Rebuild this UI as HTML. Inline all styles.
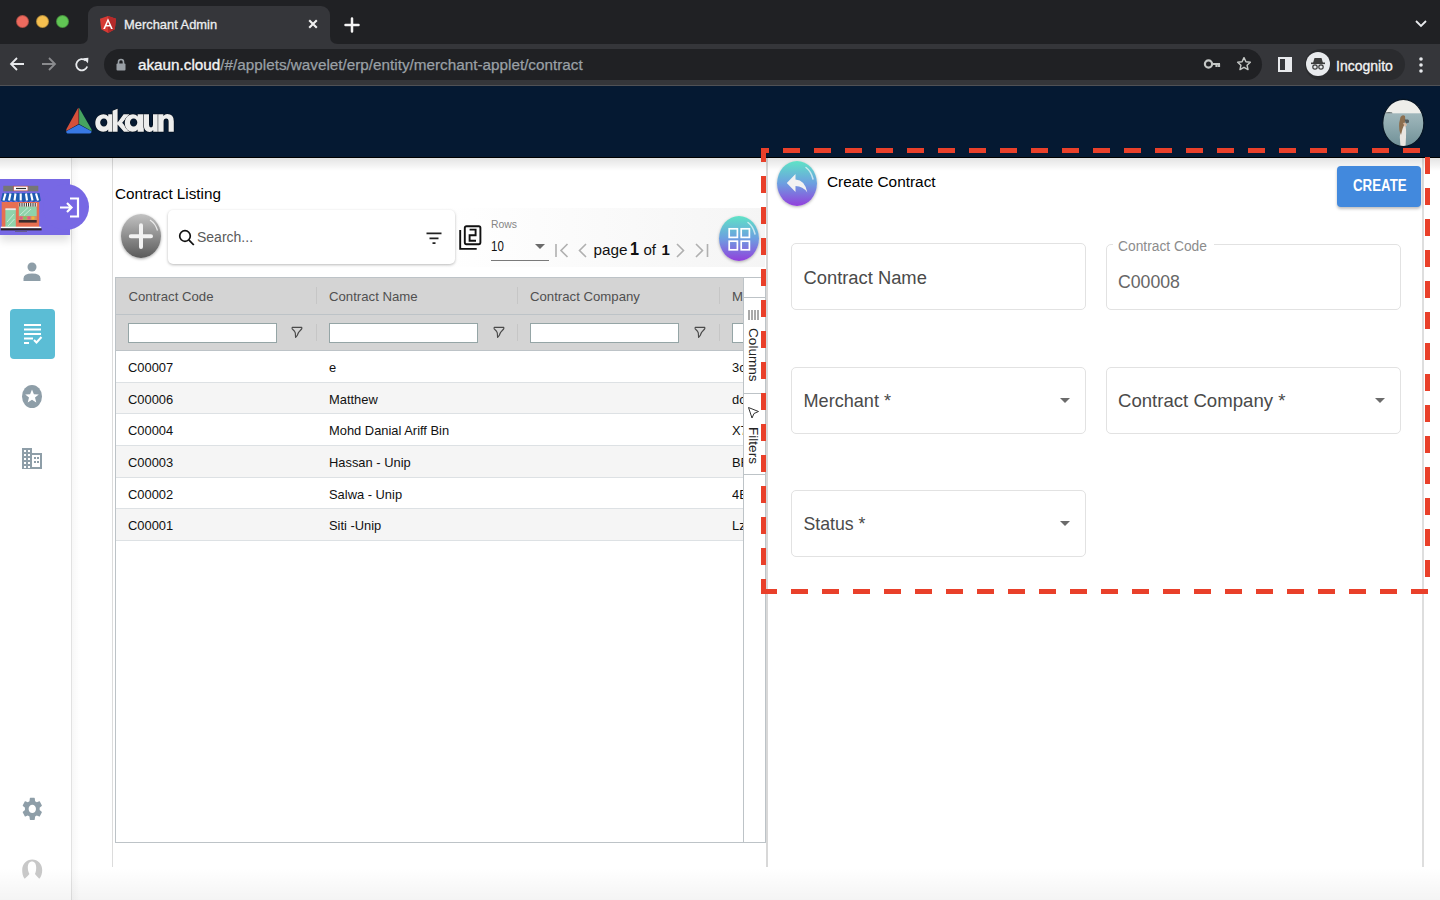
<!DOCTYPE html>
<html><head><meta charset="utf-8">
<style>
*{margin:0;padding:0;box-sizing:border-box}
html,body{width:1440px;height:900px;overflow:hidden;background:#fff;font-family:"Liberation Sans",sans-serif;position:relative}
.a{position:absolute}
.t{position:absolute;white-space:nowrap;line-height:1}
svg{position:absolute;overflow:visible}
#tabbar{left:0;top:0;width:1440px;height:44px;background:#202124}
#tab{left:88px;top:6px;width:242px;height:38px;background:#35363a;border-radius:9px 9px 0 0}
#addr{left:0;top:44px;width:1440px;height:41px;background:#35363a}
#omni{left:104px;top:49px;width:1158px;height:31px;background:#202124;border-radius:16px}
#hdr{left:0;top:85px;width:1440px;height:73px;background:#051932;border-top:1px solid #505155;border-bottom:1px solid #000}
.dot{width:13px;height:13px;border-radius:50%;border:1px solid rgba(0,0,0,.25)}
/* sidebar */
#side{left:0;top:158px;width:72px;height:742px;background:#fff;border-right:1px solid #e3e3e3}
.field{position:absolute;border:1px solid #e2e2e2;border-radius:5px;background:#fff}
.ftxt{color:#4a4a4a;font-size:18px}
.arr{position:absolute;width:0;height:0;border-left:5px solid transparent;border-right:5px solid transparent;border-top:5px solid #6b6b6b}
.rt{font-size:12.9px;color:#111}
.ht{font-size:13.2px;color:#505050}
.fin{height:20px;background:#fff;border:1px solid #95a5a6}
</style></head><body>
<!-- browser chrome -->
<div id="tabbar" class="a"></div>
<div class="a dot" style="left:16px;top:14.5px;background:#ed6a5e"></div>
<div class="a dot" style="left:36px;top:14.5px;background:#f5bf4f"></div>
<div class="a dot" style="left:56px;top:14.5px;background:#61c554"></div>
<div id="tab" class="a"></div>
<!-- tab outer curves -->
<svg style="left:80px;top:36px" width="8" height="8"><path d="M0 8 Q8 8 8 0 L8 8Z" fill="#35363a"/></svg>
<svg style="left:330px;top:36px" width="8" height="8"><path d="M8 8 Q0 8 0 0 L0 8Z" fill="#35363a"/></svg>
<!-- angular icon -->
<svg style="left:100px;top:16px" width="16" height="17" viewBox="0 0 16 17"><path d="M8 0 L16 2.8 L14.8 13.2 L8 17 L1.2 13.2 L0 2.8Z" fill="#d63a34"/><path d="M8 0 L16 2.8 L14.8 13.2 L8 17Z" fill="#b52a2a"/><path d="M8 2.2 L3.2 13 H5 L6 10.5 H10 L11 13 H12.8Z M8 5.8 L9.4 9 H6.6Z" fill="#fff"/></svg>
<div class="t" style="left:124px;top:19px;font-size:12.9px;color:#eceef0;-webkit-text-stroke:0.3px #eceef0">Merchant Admin</div>
<svg style="left:308px;top:19px" width="10" height="10"><path d="M1.2 1.2 L8.8 8.8 M8.8 1.2 L1.2 8.8" stroke="#f0f0f0" stroke-width="2.1"/></svg>
<svg style="left:345px;top:18px" width="14" height="14"><path d="M7 0.5 V13.5 M0.5 7 H13.5" stroke="#f4f4f4" stroke-width="2.5" stroke-linecap="round"/></svg>
<svg style="left:1415px;top:20px" width="12" height="8"><path d="M1 1 L6 6 L11 1" stroke="#e8eaed" stroke-width="1.8" fill="none"/></svg>
<div id="addr" class="a"></div>
<!-- nav icons -->
<svg style="left:9px;top:56px" width="16" height="16"><path d="M15 8 H2 M8 2 L2 8 L8 14" stroke="#e8eaed" stroke-width="1.8" fill="none"/></svg>
<svg style="left:41px;top:56px" width="16" height="16"><path d="M1 8 H14 M8 2 L14 8 L8 14" stroke="#8a8b8e" stroke-width="1.8" fill="none"/></svg>
<svg style="left:74px;top:57px" width="16" height="16"><path d="M13.2 9.5 A5.6 5.6 0 1 1 11.6 3.6" stroke="#e8eaed" stroke-width="1.8" fill="none"/><path d="M9 1.2 L14.4 0.8 L14 6.2Z" fill="#e8eaed"/></svg>
<div id="omni" class="a"></div>
<svg style="left:116px;top:58px" width="10" height="13"><path d="M2.5 6 V4 A2.5 2.5 0 0 1 7.5 4 V6" stroke="#9aa0a6" stroke-width="1.6" fill="none"/><rect x="0.5" y="5.5" width="9" height="7" rx="1" fill="#9aa0a6"/></svg>
<div class="t" style="left:138px;top:57.3px;font-size:15.28px;color:#9aa0a6;-webkit-text-stroke:0.25px #9aa0a6"><span style="color:#f4f4f4;-webkit-text-stroke:0.35px #f4f4f4">akaun.cloud</span>/#/applets/wavelet/erp/entity/merchant-applet/contract</div>
<svg style="left:1204px;top:58px" width="17" height="12"><circle cx="4.5" cy="6" r="3.6" fill="none" stroke="#c4c7c5" stroke-width="2.2"/><path d="M8 6 H16 M12.5 6 V9 M15 6 V9" stroke="#c4c7c5" stroke-width="2.2"/></svg>
<svg style="left:1236px;top:56px" width="16" height="16" viewBox="0 0 24 24"><path d="M12 2.5 L14.9 8.6 L21.5 9.3 L16.6 13.8 L18 20.4 L12 17 L6 20.4 L7.4 13.8 L2.5 9.3 L9.1 8.6Z" fill="none" stroke="#c4c7c5" stroke-width="2.2" stroke-linejoin="round"/></svg>
<svg style="left:1278px;top:57px" width="14" height="15"><rect x="1" y="1" width="12" height="13" fill="none" stroke="#e8eaed" stroke-width="2"/><rect x="7" y="1" width="6" height="13" fill="#e8eaed"/></svg>
<div class="a" style="left:1305px;top:49px;width:100px;height:31px;border-radius:16px;background:#2a2b2e"></div>
<div class="a" style="left:1306px;top:52px;width:24px;height:24px;border-radius:50%;background:#e8eaed"></div>
<svg style="left:1308px;top:54px" width="20" height="20" viewBox="0 0 20 20"><path d="M5 9 L6.5 4 H13.5 L15 9Z" fill="#3c3c3c"/><rect x="3" y="8.5" width="14" height="1.6" fill="#3c3c3c"/><circle cx="7" cy="13" r="2.2" fill="none" stroke="#3c3c3c" stroke-width="1.2"/><circle cx="13" cy="13" r="2.2" fill="none" stroke="#3c3c3c" stroke-width="1.2"/></svg>
<div class="t" style="left:1336px;top:58.5px;font-size:14px;color:#f4f4f4;-webkit-text-stroke:0.3px #f4f4f4">Incognito</div>
<svg style="left:1418px;top:56px" width="6" height="18"><circle cx="3" cy="3" r="1.8" fill="#e8eaed"/><circle cx="3" cy="9" r="1.8" fill="#e8eaed"/><circle cx="3" cy="15" r="1.8" fill="#e8eaed"/></svg>

<!-- app header -->
<div id="hdr" class="a"></div>
<svg style="left:66px;top:107px" width="27" height="28" viewBox="0 0 27 28"><path d="M12.6 0.7 Q12.8 0.5 12.6 0.7 L12.6 17 L0.3 23.9 Q0 23 0.6 21.8 L11.6 1.8Z" fill="#d6503a"/><path d="M13.1 0.7 L25.3 22 Q25.8 23 25.5 23.9 L13.1 17Z" fill="#46a460"/><path d="M12.85 17.4 L25.5 24.3 Q25.8 26.6 23.5 26.6 L2.5 26.6 Q0 26.6 0.3 24.3Z" fill="#3878e4"/></svg>
<svg style="left:0;top:0" width="200" height="140"><g fill="#ededed" stroke="#02070d" stroke-width="0.9" paint-order="stroke">
<path fill-rule="evenodd" d="M103.6 114.3 C98.6 114.3 95.3 118.2 95.3 123.05 C95.3 127.9 98.6 131.8 103.2 131.8 C105.3 131.8 107 131 108.2 129.6 V131.8 H112.6 V114.3 H108.2 V116.4 C107 115 105.5 114.3 103.6 114.3Z M103.9 118.4 C106.1 118.4 107.3 120.3 107.3 122.6 C107.3 124.9 106.1 126.6 103.9 126.6 C101.7 126.6 100.2 124.9 100.2 122.6 C100.2 120.3 101.7 118.4 103.9 118.4Z"/>
<path d="M112.6 110.8 L117.6 108.8 V122.6 L123.6 114.3 H129.6 L122.2 122.8 L130.2 131.8 H124 L117.6 124.6 V131.8 H112.6Z"/>
<path fill-rule="evenodd" d="M133 114.3 C128 114.3 124.8 118.2 124.8 123.05 C124.8 127.9 128 131.8 132.6 131.8 C134.7 131.8 136.4 131 137.6 129.6 V131.8 H143.8 V114.3 H137.6 V116.4 C136.4 115 134.9 114.3 133 114.3Z M133.6 118.4 C135.8 118.4 137.3 120.3 137.3 122.6 C137.3 124.9 135.8 126.6 133.6 126.6 C131.4 126.6 130 124.9 130 122.6 C130 120.3 131.4 118.4 133.6 118.4Z"/>
<path d="M143.8 114.3 H149 V124.8 Q149 127.4 151 127.4 Q153 127.4 153 124.8 V114.3 H158.2 V131.8 H153.2 V130 Q152 131.9 149.6 131.9 Q143.8 131.9 143.8 125Z"/>
<path d="M158.2 131.8 V114.3 H163.4 V116.1 Q164.8 114.1 167.2 114.1 Q173.8 114.1 173.8 121.2 V131.8 H168.6 V121.8 Q168.6 118.6 166.2 118.6 Q163.6 118.6 163.6 121.8 V131.8Z"/>
</g></svg>
<svg style="left:1382px;top:99px" width="42" height="48" viewBox="0 0 42 48"><defs><clipPath id="av"><ellipse cx="21.3" cy="24" rx="20.6" ry="23.6"/></clipPath><linearGradient id="sea" x1="0" y1="0" x2="0" y2="1"><stop offset="0" stop-color="#b3c6c9"/><stop offset="0.5" stop-color="#93adb2"/><stop offset="1" stop-color="#6f8f96"/></linearGradient></defs><g clip-path="url(#av)"><rect width="42" height="48" fill="url(#sea)"/><rect width="42" height="14.3" fill="#eeeeea"/><path d="M2 14.3 Q5 12.6 10 13.4 L10.5 14.3Z" fill="#3a4a4c"/><path d="M17.8 38 Q18.5 31 19.5 26 L23 25 Q24.5 30 24 38 L23.5 48 H18.5Z" fill="#e9e6e1"/><path d="M18.5 18 Q20.5 15 23 17 Q23.8 20 22.5 25 Q20 30 19 36 Q16.5 31 17.2 24Z" fill="#8c6e4e"/><path d="M22.5 20.5 H26 Q27.5 21 27 23.5 L24 24.5Z" fill="#535b5d"/><path d="M21 24 Q24 23 25 26 L23 28Z" fill="#d9b9a0"/></g><ellipse cx="21.3" cy="24" rx="20.6" ry="23.6" fill="none" stroke="#061423" stroke-width="1.2"/></svg>


<!-- page shadows -->
<div class="a" style="left:72px;top:158px;width:1368px;height:742px;background:#fff"></div>

<!-- panels -->
<div class="a" style="left:112px;top:158px;width:1px;height:709px;background:#dcdcdc"></div>
<div class="a" style="left:766px;top:158px;width:2px;height:709px;background:#d8d8d8"></div>
<div class="a" style="left:1422px;top:158px;width:2px;height:709px;background:#dedede"></div>

<div class="a" style="left:72px;top:158px;width:8px;height:742px;background:linear-gradient(90deg,rgba(0,0,0,.03),rgba(0,0,0,0))"></div>

<!-- sidebar -->
<div class="a" style="left:0;top:158px;width:71px;height:742px;background:#fff"></div>
<div class="a" style="left:71px;top:158px;width:1px;height:742px;background:#e2e2e2"></div>
<div class="a" style="left:0;top:158px;width:1440px;height:13px;background:linear-gradient(rgba(0,0,0,.11),rgba(0,0,0,0))"></div>
<div class="a" style="left:0;top:179px;width:70px;height:56px;background:#7768e4;box-shadow:0 6px 8px rgba(0,0,0,.12)"></div>
<div class="a" style="left:43px;top:184px;width:46px;height:46px;border-radius:50%;background:#7768e4"></div>
<!-- shop image -->
<svg style="left:0;top:184px" width="42" height="48" viewBox="0 0 42 48">
<rect x="3.3" y="1.8" width="35" height="5.5" fill="#767676"/><rect x="13.7" y="2.2" width="14.2" height="4.6" fill="#fff" stroke="#c44" stroke-width="0.5"/><path d="M16 4.5 H26" stroke="#333" stroke-width="1.2"/>
<rect x="1.7" y="18" width="37.5" height="25.5" fill="#e76f51"/>
<path d="M2.5 9 H39.5 L40.8 16.5 Q38.5 19 36 16.8 Q33.5 19 31 16.8 Q28.5 19 26 16.8 Q23.5 19 21 16.8 Q18.5 19 16 16.8 Q13.5 19 11 16.8 Q8.5 19 6 16.8 Q3.5 19 0.8 16.5Z" fill="#1e5bb0"/>
<path d="M5.5 9.5 L3.5 16.5 M10.5 9.5 L9 16.5 M15.5 9.5 L14.5 16.5 M20.7 9.5 V16.5 M26 9.5 L27 16.5 M31 9.5 L32.5 16.5 M36 9.5 L38 16.5" stroke="#fff" stroke-width="2.1"/>
<rect x="5.4" y="25.5" width="10.4" height="18.8" fill="#8fd3ab"/><rect x="5.4" y="24.3" width="10.4" height="1.8" fill="#e8e8e8"/><path d="M7 38 L14 30 M8 42 L14.5 35" stroke="#d8f0e0" stroke-width="0.8"/>
<rect x="18.8" y="19" width="17.9" height="3.7" fill="#fff"/><path d="M19.8 19 V22.7 M22 19 V22.7 M24.2 19 V22.7 M26.4 19 V22.7 M28.6 19 V22.7 M30.8 19 V22.7 M33 19 V22.7 M35.2 19 V22.7" stroke="#222" stroke-width="1"/>
<rect x="18.8" y="22.7" width="17.9" height="9.6" fill="#8fd3ab"/><path d="M20 31 L28 23.5 M24 31.5 L31 25" stroke="#d8f0e0" stroke-width="0.8"/>
<rect x="18.8" y="32.2" width="17.9" height="3.8" fill="#c96"/><rect x="19.5" y="32.5" width="3" height="3" fill="#e05a8a"/><rect x="23.5" y="32.5" width="3" height="3" fill="#7cc46a"/><rect x="27.5" y="32.5" width="3" height="3" fill="#e05a8a"/><rect x="31.5" y="32.5" width="3" height="3" fill="#f2b33d"/>
<rect x="18.8" y="36" width="17.9" height="2.6" fill="#3b2c2c"/>
<rect x="0.8" y="42.7" width="40.4" height="1.7" fill="#fff"/><rect x="0.8" y="44.3" width="40.8" height="2.1" fill="#2a2222"/><path d="M15 47.5 H27" stroke="#555" stroke-width="0.6"/>
</svg>
<svg style="left:59px;top:197px" width="21" height="21" viewBox="0 0 21 21"><path d="M1 10.5 H12 M8 6 L12.5 10.5 L8 15" stroke="#fff" stroke-width="2.2" fill="none"/><path d="M11 1.5 H19 V19.5 H11" stroke="#fff" stroke-width="2.2" fill="none"/></svg>
<div class="a" style="left:0;top:868px;width:1440px;height:32px;background:linear-gradient(rgba(0,0,0,0),rgba(0,0,0,.045))"></div>
<!-- person -->
<svg style="left:22px;top:262px" width="20" height="20" viewBox="0 0 20 20"><circle cx="10" cy="5" r="4.5" fill="#8e9ea8"/><path d="M1.5 19 V16.5 Q1.5 11.5 10 11.5 Q18.5 11.5 18.5 16.5 V19Z" fill="#8e9ea8"/></svg>
<!-- selected -->
<div class="a" style="left:10px;top:309px;width:45px;height:50px;border-radius:4px;background:#5bbdd5"></div>
<svg style="left:23px;top:323px" width="20" height="22" viewBox="0 0 20 22"><path d="M1 2 H18 M1 6.5 H18 M1 11 H18 M1 15.5 H10 M1 20 H6" stroke="#fff" stroke-width="2"/><path d="M11 17 L13.5 19.5 L18.5 14" stroke="#fff" stroke-width="2" fill="none"/></svg>
<!-- star -->
<svg style="left:22px;top:385px" width="20" height="23" viewBox="0 0 20 23"><ellipse cx="10" cy="11.5" rx="10" ry="11.5" fill="#8e9ea8"/><path d="M10 4.5 L11.9 9.3 L16.8 9.5 L13 12.6 L14.3 17.5 L10 14.7 L5.7 17.5 L7 12.6 L3.2 9.5 L8.1 9.3Z" fill="#fff"/></svg>
<!-- building -->
<svg style="left:22px;top:448px" width="20" height="21" viewBox="0 0 20 21"><path d="M0 0 H10 V5 H20 V21 H0Z" fill="#8e9ea8"/><g fill="#fff"><rect x="2" y="2" width="2" height="2"/><rect x="6" y="2" width="2" height="2"/><rect x="2" y="6" width="2" height="2"/><rect x="6" y="6" width="2" height="2"/><rect x="2" y="10" width="2" height="2"/><rect x="6" y="10" width="2" height="2"/><rect x="2" y="14" width="2" height="2"/><rect x="6" y="14" width="2" height="2"/><rect x="2" y="18" width="2" height="2"/><rect x="6" y="18" width="2" height="2"/><rect x="10" y="7" width="8" height="12" fill="#fff"/></g><g fill="#8e9ea8"><rect x="12" y="9" width="2" height="2"/><rect x="12" y="13" width="2" height="2"/><rect x="15" y="9" width="2" height="2"/><rect x="15" y="13" width="2" height="2"/></g></svg>
<!-- gear -->
<svg style="left:20px;top:795px" width="24.6" height="27.8" viewBox="0 0 24 24" preserveAspectRatio="none"><path fill="#8e9ea8" d="M19.14 12.94c.04-.3.06-.61.06-.94 0-.32-.02-.64-.07-.94l2.03-1.58a.49.49 0 0 0 .12-.61l-1.92-3.32a.488.488 0 0 0-.59-.22l-2.39.96c-.5-.38-1.03-.7-1.62-.94l-.36-2.54a.484.484 0 0 0-.48-.41h-3.84c-.24 0-.43.17-.47.41l-.36 2.54c-.59.24-1.13.57-1.62.94l-2.39-.96c-.22-.08-.47 0-.59.22L2.74 8.87c-.12.21-.08.47.12.61l2.03 1.58c-.05.3-.09.63-.09.94s.02.64.07.94l-2.03 1.58a.49.49 0 0 0-.12.61l1.92 3.32c.12.22.37.29.59.22l2.39-.96c.5.38 1.03.7 1.62.94l.36 2.54c.05.24.24.41.48.41h3.84c.24 0 .44-.17.47-.41l.36-2.54c.59-.24 1.13-.56 1.62-.94l2.39.96c.22.08.47 0 .59-.22l1.92-3.32c.12-.22.07-.47-.12-.61l-2.01-1.58zM12 15.6c-1.98 0-3.6-1.62-3.6-3.6s1.62-3.6 3.6-3.6 3.6 1.62 3.6 3.6-1.62 3.6-3.6 3.6z"/></svg>
<!-- user outline -->
<svg style="left:22px;top:859px" width="21" height="20" viewBox="0 0 21 20"><path d="M2.7 19.8 C0.8 17.5 0.2 14.5 0.2 11 C0.2 5 4.6 0.5 10.2 0.5 C15.8 0.5 20.2 5 20.2 11 C20.2 14.5 19.4 17.5 17.3 19.8 C15.8 18.2 13.8 16.5 13 15.1 C13.8 13 14.2 11 14.2 8.5 C14.2 4.8 12.6 2.5 10 2.5 C7.4 2.5 5.8 4.8 5.8 8.5 C5.8 11 6.4 13 7.4 15.1 C6.6 16.5 4.4 18.2 2.7 19.8Z" fill="#c8c8c8"/></svg>


<!-- listing -->
<div class="t" style="left:115px;top:186px;font-size:15.25px;color:#000">Contract Listing</div>
<div class="a" style="left:115px;top:208px;width:650px;height:59px;background:linear-gradient(90deg,rgba(245,245,245,0) 50%,#f5f5f5 100%)"></div>
<div class="a" style="left:121px;top:214px;width:40px;height:44px;border-radius:50%;background:linear-gradient(#c2c2c2,#5a5a5a);box-shadow:0 1px 3px rgba(0,0,0,.35)"></div>
<svg style="left:121px;top:214px" width="40" height="44" viewBox="0 0 40 44"><path d="M29 6 Q34.5 9.5 36.5 16.5" stroke="rgba(255,255,255,.75)" stroke-width="1.2" fill="none"/><path d="M20 11.2 V33 M9.8 22.3 H30" stroke="#f2f2f2" stroke-width="4" stroke-linecap="round"/></svg>
<div class="a" style="left:167.5px;top:209.5px;width:287px;height:54.5px;border-radius:5px;background:#fff;box-shadow:0 1px 3px rgba(0,0,0,.28)"></div>
<svg style="left:178px;top:229px" width="18" height="18" viewBox="0 0 18 18"><circle cx="7" cy="7" r="5.3" fill="none" stroke="#111" stroke-width="1.7"/><path d="M10.8 10.8 L15.8 16" stroke="#111" stroke-width="1.8"/></svg>
<div class="t" style="left:197px;top:230px;font-size:14px;color:#5a5a5a">Search...</div>
<svg style="left:426px;top:231px" width="16" height="14"><path d="M0.5 2.3 H15.5 M3.5 7.3 H12.5 M6.5 12.1 H9.5" stroke="#222" stroke-width="1.8"/></svg>
<svg style="left:459px;top:225px" width="23" height="25" viewBox="0 0 23 25"><path d="M1.2 5 V23.9 H17.7" stroke="#111" stroke-width="1.9" fill="none"/><rect x="5.8" y="1.2" width="15.6" height="18" rx="1.6" fill="none" stroke="#111" stroke-width="1.9"/><path d="M10.6 4.6 H16.6 V10.2 H10.6 V15.8 H17" stroke="#111" stroke-width="1.9" fill="none"/></svg>
<div class="t" style="left:491px;top:220px;font-size:10.4px;color:#858585">Rows</div>
<div class="t" style="left:491px;top:238.5px;font-size:14px;color:#111;transform:scaleX(0.82);transform-origin:0 0">10</div>
<div class="arr" style="left:534.5px;top:244px"></div>
<div class="a" style="left:491px;top:260px;width:58px;height:1px;background:#7a7a7a"></div>
<svg style="left:554px;top:243px" width="160" height="16"><g stroke="#b0b0b0" stroke-width="1.6" fill="none"><path d="M2 1 V14"/><path d="M13.5 1 L7 7.5 L13.5 14"/><path d="M586 1 L579.5 7.5 L586 14" transform="translate(-554 0)"/><path d="M677 1 L683.5 7.5 L677 14" transform="translate(-554 0)"/><path d="M696 1 L702.5 7.5 L696 14 M707.5 1 V14" transform="translate(-554 0)"/></g></svg>
<div class="t" style="left:593.5px;top:242px;font-size:15.3px;color:#111">page</div>
<div class="t" style="left:629.5px;top:239.8px;font-size:18px;font-weight:bold;color:#111;transform:scaleX(0.9);transform-origin:0 0">1</div>
<div class="t" style="left:643.5px;top:242.3px;font-size:15px;color:#111">of</div>
<div class="t" style="left:661.5px;top:242.3px;font-size:15px;font-weight:bold;color:#111">1</div>
<div class="a" style="left:718.5px;top:216px;width:40px;height:45px;border-radius:50%;background:linear-gradient(#5fe3c6,#6d9fe0 50%,#9240dc);box-shadow:0 1px 3px rgba(0,0,0,.3)"></div>
<svg style="left:718.5px;top:216px" width="40" height="45" viewBox="0 0 40 45"><path d="M29 6.5 Q34 10 36 18" stroke="rgba(255,255,255,.65)" stroke-width="1.5" fill="none" stroke-linecap="round"/><g fill="none" stroke="#fff" stroke-width="1.7"><rect x="10.2" y="12.8" width="8.2" height="8.6"/><rect x="22.2" y="12.8" width="8.2" height="8.6"/><rect x="10.2" y="25.2" width="8.2" height="8.6"/><rect x="22.2" y="25.2" width="8.2" height="8.6"/></g></svg>

<!-- table -->
<div class="a" style="left:115px;top:277px;width:651px;height:566px;border:1px solid #bdc3c7;background:#fff"></div>
<div class="a" style="left:116px;top:278px;width:627px;height:73px;background:#d4d4d4"></div>
<div class="a" style="left:116px;top:314px;width:627px;height:1px;background:#bdc3c7"></div>
<div class="a" style="left:116px;top:350px;width:627px;height:1px;background:#bdc3c7"></div>
<div class="a" style="left:116px;top:351.00px;width:627px;height:31.67px;background:#fff;border-bottom:1px solid #dde1e4"></div>
<div class="t rt" style="left:128px;top:362.08px">C00007</div><div class="t rt" style="left:329px;top:362.08px">e</div><div class="t rt" style="left:732px;top:362.08px;width:11px;overflow:hidden">3c</div>
<div class="a" style="left:116px;top:382.67px;width:627px;height:31.67px;background:#f5f5f5;border-bottom:1px solid #dde1e4"></div>
<div class="t rt" style="left:128px;top:393.75px">C00006</div><div class="t rt" style="left:329px;top:393.75px">Matthew</div><div class="t rt" style="left:732px;top:393.75px;width:11px;overflow:hidden">dc</div>
<div class="a" style="left:116px;top:414.34px;width:627px;height:31.67px;background:#fff;border-bottom:1px solid #dde1e4"></div>
<div class="t rt" style="left:128px;top:425.42px">C00004</div><div class="t rt" style="left:329px;top:425.42px">Mohd Danial Ariff Bin</div><div class="t rt" style="left:732px;top:425.42px;width:11px;overflow:hidden">X7</div>
<div class="a" style="left:116px;top:446.01px;width:627px;height:31.67px;background:#f5f5f5;border-bottom:1px solid #dde1e4"></div>
<div class="t rt" style="left:128px;top:457.09px">C00003</div><div class="t rt" style="left:329px;top:457.09px">Hassan - Unip</div><div class="t rt" style="left:732px;top:457.09px;width:11px;overflow:hidden">BF</div>
<div class="a" style="left:116px;top:477.68px;width:627px;height:31.67px;background:#fff;border-bottom:1px solid #dde1e4"></div>
<div class="t rt" style="left:128px;top:488.76px">C00002</div><div class="t rt" style="left:329px;top:488.76px">Salwa - Unip</div><div class="t rt" style="left:732px;top:488.76px;width:11px;overflow:hidden">4E</div>
<div class="a" style="left:116px;top:509.35px;width:627px;height:31.67px;background:#f5f5f5;border-bottom:1px solid #dde1e4"></div>
<div class="t rt" style="left:128px;top:520.43px">C00001</div><div class="t rt" style="left:329px;top:520.43px">Siti -Unip</div><div class="t rt" style="left:732px;top:520.43px;width:11px;overflow:hidden">Lz</div>

<div class="a" style="left:316px;top:287px;width:1px;height:17px;background:#c6c6c6"></div>
<div class="a" style="left:517px;top:287px;width:1px;height:17px;background:#c6c6c6"></div>
<div class="a" style="left:719px;top:287px;width:1px;height:17px;background:#c6c6c6"></div>
<div class="a" style="left:316px;top:324px;width:1px;height:17px;background:#c6c6c6"></div>
<div class="a" style="left:517px;top:324px;width:1px;height:17px;background:#c6c6c6"></div>
<div class="a" style="left:719px;top:324px;width:1px;height:17px;background:#c6c6c6"></div>
<div class="t ht" style="left:128.5px;top:289.8px">Contract Code</div>
<div class="t ht" style="left:329px;top:289.8px">Contract Name</div>
<div class="t ht" style="left:530px;top:289.8px">Contract Company</div>
<div class="t ht" style="left:732px;top:289.8px;width:11px;overflow:hidden">M</div>
<div class="a fin" style="left:128px;top:323px;width:148.5px"></div>
<div class="a fin" style="left:329px;top:323px;width:149px"></div>
<div class="a fin" style="left:530px;top:323px;width:149px"></div>
<div class="a fin" style="left:732px;top:323px;width:11px;border-right:0"></div>
<svg style="left:290px;top:326px" width="12" height="12" viewBox="0 0 12 12"><path d="M2.3 1.4 H11.7 Q12.3 1.9 11.6 3 L8.6 6.4 Q7.8 7.8 7.3 9.4 L5.6 11.4 Q5.4 8.5 5.3 7 Q5 6 4.3 5 L2.2 2.8 Q1.8 1.8 2.3 1.4Z" fill="none" stroke="#4a4a4a" stroke-width="1.15" stroke-linejoin="round"/></svg>
<svg style="left:492px;top:326px" width="12" height="12" viewBox="0 0 12 12"><path d="M2.3 1.4 H11.7 Q12.3 1.9 11.6 3 L8.6 6.4 Q7.8 7.8 7.3 9.4 L5.6 11.4 Q5.4 8.5 5.3 7 Q5 6 4.3 5 L2.2 2.8 Q1.8 1.8 2.3 1.4Z" fill="none" stroke="#4a4a4a" stroke-width="1.15" stroke-linejoin="round"/></svg>
<svg style="left:693px;top:326px" width="12" height="12" viewBox="0 0 12 12"><path d="M2.3 1.4 H11.7 Q12.3 1.9 11.6 3 L8.6 6.4 Q7.8 7.8 7.3 9.4 L5.6 11.4 Q5.4 8.5 5.3 7 Q5 6 4.3 5 L2.2 2.8 Q1.8 1.8 2.3 1.4Z" fill="none" stroke="#4a4a4a" stroke-width="1.15" stroke-linejoin="round"/></svg>
<!-- side bar -->
<div class="a" style="left:743px;top:278px;width:22px;height:564px;background:#fff;border-left:1px solid #bdc3c7"></div>
<div class="a" style="left:743px;top:297px;width:22px;height:97px;border-top:1px solid #bdc3c7;border-bottom:1px solid #bdc3c7"></div>
<div class="a" style="left:743px;top:394px;width:22px;height:81px;border-bottom:1px solid #bdc3c7"></div>
<svg style="left:748px;top:310px" width="11" height="10"><path d="M1 0 V10 M4 0 V10 M7 0 V10 M10 0 V10" stroke="#555" stroke-width="1"/></svg>
<div class="t" style="left:760px;top:327.5px;font-size:13.6px;color:#222;transform:rotate(90deg);transform-origin:0 0">Columns</div>
<svg style="left:748px;top:407px" width="11" height="12" viewBox="0 0 11 12"><path d="M0.5 0.5 L10.5 4.5 L6 6.5 L4 11 Z" fill="none" stroke="#333" stroke-width="1"/></svg>
<div class="t" style="left:760px;top:426.5px;font-size:13.6px;color:#222;transform:rotate(90deg);transform-origin:0 0">Filters</div>


<!-- right panel -->
<div class="a" style="left:777px;top:160.5px;width:40px;height:45px;border-radius:50%;background:linear-gradient(#5fe3c6,#6d9fe0 50%,#9240dc);box-shadow:0 1px 3px rgba(0,0,0,.3)"></div>
<svg style="left:777px;top:160.5px" width="40" height="45" viewBox="0 0 40 45"><path d="M29 6.5 Q34 10 36 18" stroke="rgba(255,255,255,.65)" stroke-width="1.5" fill="none" stroke-linecap="round"/><path d="M9.8 22 L18.5 13 V18.5 Q28 19 30.3 31.5 Q26 25 18.5 25 V31Z" fill="#f2f2f2"/></svg>
<div class="t" style="left:827px;top:174.16px;font-size:15.4px;color:#000">Create Contract</div>
<div class="a" style="left:1336.6px;top:166.3px;width:84px;height:40.6px;border-radius:4px;background:#4289dd;box-shadow:0 2px 3px rgba(0,0,0,.25)"></div>
<div class="t" style="left:1352.6px;top:178.46px;font-size:16px;font-weight:bold;color:#fff;transform:scaleX(0.83);transform-origin:0 0">CREATE</div>

<div class="field" style="left:791px;top:243px;width:295px;height:67px"></div>
<div class="t ftxt" style="left:803.5px;top:268.9px;font-size:18.35px">Contract Name</div>
<div class="field" style="left:1106px;top:243.5px;width:295px;height:66.5px"></div>
<div class="a" style="left:1112.5px;top:240px;width:101px;height:8px;background:#fff"></div>
<div class="t" style="left:1118px;top:240.2px;font-size:13.8px;color:#8c8c8c">Contract Code</div>
<div class="t" style="left:1118px;top:274px;font-size:17.7px;color:#666">C00008</div>

<div class="field" style="left:791px;top:366.5px;width:295px;height:67px"></div>
<div class="t ftxt" style="left:803.5px;top:391.68px;font-size:18.1px">Merchant *</div>
<div class="arr" style="left:1060px;top:397.5px"></div>
<div class="field" style="left:1106px;top:366.5px;width:295px;height:67px"></div>
<div class="t ftxt" style="left:1118px;top:391.8px;font-size:18.6px">Contract Company *</div>
<div class="arr" style="left:1375px;top:397.5px"></div>

<div class="field" style="left:791px;top:490px;width:295px;height:67px"></div>
<div class="t ftxt" style="left:803.5px;top:516px;font-size:17.7px">Status *</div>
<div class="arr" style="left:1060px;top:521px"></div>
<svg style="left:0;top:0" width="1440" height="900"><g fill="#e9402a"><rect x="761" y="148" width="8" height="5"/><rect x="783" y="148" width="17" height="5"/><rect x="814" y="148" width="17" height="5"/><rect x="845" y="148" width="17" height="5"/><rect x="876" y="148" width="17" height="5"/><rect x="907" y="148" width="17" height="5"/><rect x="938" y="148" width="17" height="5"/><rect x="969" y="148" width="17" height="5"/><rect x="1000" y="148" width="17" height="5"/><rect x="1031" y="148" width="17" height="5"/><rect x="1062" y="148" width="17" height="5"/><rect x="1093" y="148" width="17" height="5"/><rect x="1124" y="148" width="17" height="5"/><rect x="1155" y="148" width="17" height="5"/><rect x="1186" y="148" width="17" height="5"/><rect x="1217" y="148" width="17" height="5"/><rect x="1248" y="148" width="17" height="5"/><rect x="1279" y="148" width="17" height="5"/><rect x="1310" y="148" width="17" height="5"/><rect x="1341" y="148" width="17" height="5"/><rect x="1372" y="148" width="17" height="5"/><rect x="1403" y="148" width="17" height="5"/><rect x="761" y="589" width="16" height="5"/><rect x="791" y="589" width="17" height="5"/><rect x="822" y="589" width="17" height="5"/><rect x="853" y="589" width="17" height="5"/><rect x="884" y="589" width="17" height="5"/><rect x="915" y="589" width="17" height="5"/><rect x="946" y="589" width="17" height="5"/><rect x="977" y="589" width="17" height="5"/><rect x="1008" y="589" width="17" height="5"/><rect x="1039" y="589" width="17" height="5"/><rect x="1070" y="589" width="17" height="5"/><rect x="1101" y="589" width="17" height="5"/><rect x="1132" y="589" width="17" height="5"/><rect x="1163" y="589" width="17" height="5"/><rect x="1194" y="589" width="17" height="5"/><rect x="1225" y="589" width="17" height="5"/><rect x="1256" y="589" width="17" height="5"/><rect x="1287" y="589" width="17" height="5"/><rect x="1318" y="589" width="17" height="5"/><rect x="1349" y="589" width="17" height="5"/><rect x="1380" y="589" width="17" height="5"/><rect x="1411" y="589" width="17" height="5"/><rect x="761" y="148" width="5" height="14"/><rect x="761" y="176" width="5" height="17"/><rect x="761" y="207" width="5" height="17"/><rect x="761" y="238" width="5" height="17"/><rect x="761" y="269" width="5" height="17"/><rect x="761" y="300" width="5" height="17"/><rect x="761" y="331" width="5" height="17"/><rect x="761" y="362" width="5" height="17"/><rect x="761" y="393" width="5" height="17"/><rect x="761" y="424" width="5" height="17"/><rect x="761" y="455" width="5" height="17"/><rect x="761" y="486" width="5" height="17"/><rect x="761" y="517" width="5" height="17"/><rect x="761" y="548" width="5" height="17"/><rect x="761" y="579" width="5" height="15"/><rect x="1425" y="157" width="5" height="17"/><rect x="1425" y="188" width="5" height="17"/><rect x="1425" y="219" width="5" height="17"/><rect x="1425" y="250" width="5" height="17"/><rect x="1425" y="281" width="5" height="17"/><rect x="1425" y="312" width="5" height="17"/><rect x="1425" y="343" width="5" height="17"/><rect x="1425" y="374" width="5" height="17"/><rect x="1425" y="405" width="5" height="17"/><rect x="1425" y="436" width="5" height="17"/><rect x="1425" y="467" width="5" height="17"/><rect x="1425" y="498" width="5" height="17"/><rect x="1425" y="529" width="5" height="17"/><rect x="1425" y="560" width="5" height="17"/></g></svg>

</body></html>
